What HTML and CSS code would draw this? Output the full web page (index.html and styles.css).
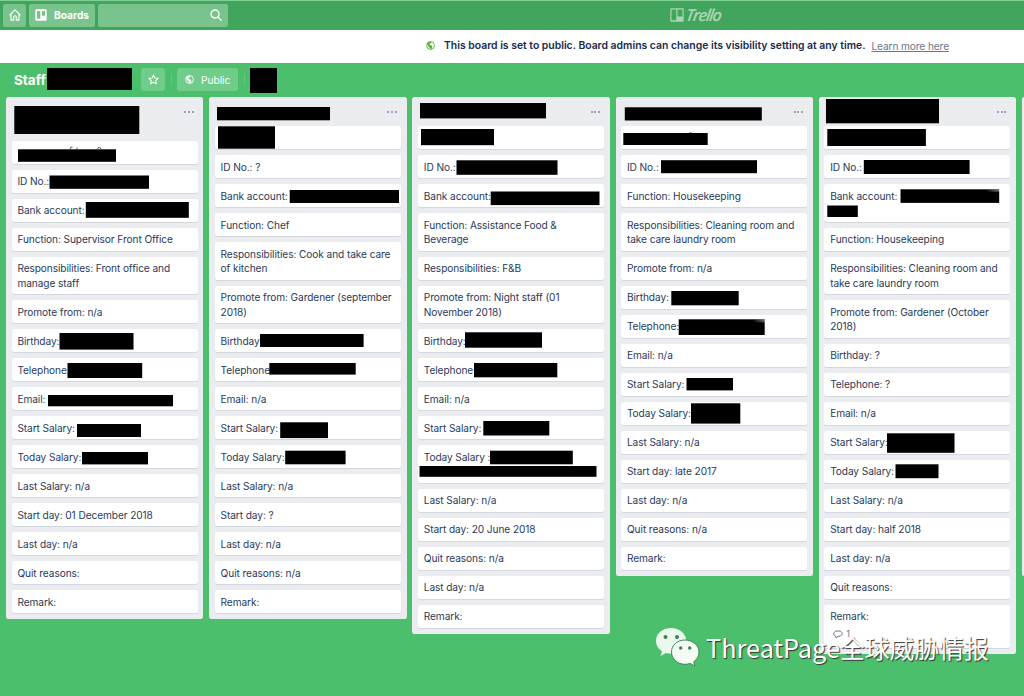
FILE: index.html
```html
<!DOCTYPE html>
<html lang="en">
<head>
<meta charset="utf-8">
<title>Staff | Trello</title>
<link rel="stylesheet" href="styles.css">
</head>
<body>
<header class="nav">
  <div class="nav-left">
    <span class="btn home"><svg width="12" height="12" viewBox="0 0 12 12" fill="none" stroke="#fff" stroke-width="1.1" stroke-linejoin="round" stroke-linecap="round"><path d="M.8 6 6 .9 11.2 6M2 5.2v5.9h2.7V8a1.3 1.3 0 0 1 2.6 0v3.1H10V5.2"/></svg></span>
    <span class="btn boards"><svg width="12" height="12" viewBox="0 0 12 12"><path fill="#fff" fill-rule="evenodd" d="M1.6.3h8.8c.8 0 1.3.5 1.3 1.3v8.8c0 .8-.5 1.3-1.3 1.3H1.6C.8 11.7.3 11.2.3 10.400V1.600C.3.800.8.300 1.600.300ZM2 1.900v7.800h3.300V1.900Zm5 0v4.800h3V1.900Z"/></svg>Boards</span>
    <span class="btn search"><svg width="12" height="12" viewBox="0 0 12 12" fill="none" stroke="#fff" stroke-width="1.3" stroke-linecap="round"><circle cx="5" cy="5" r="4"/><path d="m8 8 3.200 3.200"/></svg></span>
  </div>
  <div class="logo"><svg width="14" height="14" viewBox="0 0 14 14"><path fill="#a9d7b3" fill-rule="evenodd" d="M1.200.300h11.600c.6 0 .9.400.9.900v11.600c0 .5-.3.9-.9.9H1.200c-.5 0-.9-.4-.9-.9V1.200c0-.5.4-.9.9-.9ZM1.500 1.500v10.700h4.800V1.500Zm6 0v7h5v-7Z"/></svg><span>Trello</span></div>
</header>

<div class="banner">
  <svg class="globe" width="9" height="9" viewBox="0 0 10 10"><circle cx="5" cy="5" r="4.400" fill="none" stroke="#5aac44"/><path fill="#5aac44" d="M1 3.200 3.500.900l2.500.2-.6 1.500-1.500.6-.2 1 2 .5 1.500 1.700-1.200 2.500L5 9.300l-.9-2-1.500-1.100Z"/></svg>
  <b>This board is set to public. Board admins can change its visibility setting at any time.</b>
  <span class="more">Learn more here</span>
</div>

<div class="board-head">
  <h1>Staff</h1>
  <span class="btn star"><svg width="11" height="11" viewBox="0 0 12 12" fill="none" stroke="#fff" stroke-width="1.100" stroke-linejoin="round"><path d="m6 1 1.500 3.300 3.600.4-2.700 2.400.8 3.600L6 8.900l-3.200 1.800.8-3.600L.9 4.700l3.600-.4Z"/></svg></span>
  <i class="sep"></i>
  <span class="btn public"><svg width="9" height="9" viewBox="0 0 10 10"><circle cx="5" cy="5" r="4.400" fill="none" stroke="#fff"/><path fill="#fff" d="M1 3.200 3.500.900l2.500.2-.6 1.500-1.500.6-.2 1 2 .5 1.500 1.700-1.200 2.500L5 9.300l-.9-2-1.500-1.100Z"/></svg>Public</span>
  <i class="sep last"></i>
</div>

<main class="board">
  <section class="list">
    <div class="list-head tall"><span class="menu"><i></i><i></i><i></i></span></div>
    <div class="card"></div>
    <div class="card">ID No.:</div>
    <div class="card">Bank account:</div>
    <div class="card">Function: Supervisor Front Office</div>
    <div class="card">Responsibilities: Front office and<br>manage staff</div>
    <div class="card">Promote from: n/a</div>
    <div class="card">Birthday:</div>
    <div class="card">Telephone:</div>
    <div class="card">Email:</div>
    <div class="card">Start Salary:</div>
    <div class="card">Today Salary:</div>
    <div class="card">Last Salary: n/a</div>
    <div class="card">Start day: 01 December 2018</div>
    <div class="card">Last day: n/a</div>
    <div class="card">Quit reasons:</div>
    <div class="card">Remark:</div>
  </section>
  <section class="list">
    <div class="list-head"><span class="menu"><i></i><i></i><i></i></span></div>
    <div class="card"></div>
    <div class="card">ID No.: ?</div>
    <div class="card">Bank account:</div>
    <div class="card">Function: Chef</div>
    <div class="card">Responsibilities: Cook and take care<br>of kitchen</div>
    <div class="card">Promote from: Gardener (september<br>2018)</div>
    <div class="card">Birthday</div>
    <div class="card">Telephone</div>
    <div class="card">Email: n/a</div>
    <div class="card">Start Salary:</div>
    <div class="card">Today Salary:</div>
    <div class="card">Last Salary: n/a</div>
    <div class="card">Start day: ?</div>
    <div class="card">Last day: n/a</div>
    <div class="card">Quit reasons: n/a</div>
    <div class="card">Remark:</div>
  </section>
  <section class="list">
    <div class="list-head"><span class="menu"><i></i><i></i><i></i></span></div>
    <div class="card"></div>
    <div class="card">ID No.:</div>
    <div class="card">Bank account:</div>
    <div class="card">Function: Assistance Food &amp;<br>Beverage</div>
    <div class="card">Responsibilities: F&amp;B</div>
    <div class="card">Promote from: Night staff (01<br>November 2018)</div>
    <div class="card">Birthday:</div>
    <div class="card">Telephone:</div>
    <div class="card">Email: n/a</div>
    <div class="card">Start Salary:</div>
    <div class="card two-line">Today Salary :</div>
    <div class="card">Last Salary: n/a</div>
    <div class="card">Start day: 20 June 2018</div>
    <div class="card">Quit reasons: n/a</div>
    <div class="card">Last day: n/a</div>
    <div class="card">Remark:</div>
  </section>
  <section class="list">
    <div class="list-head"><span class="menu"><i></i><i></i><i></i></span></div>
    <div class="card"></div>
    <div class="card">ID No.:</div>
    <div class="card">Function: Housekeeping</div>
    <div class="card">Responsibilities: Cleaning room and<br>take care laundry room</div>
    <div class="card">Promote from: n/a</div>
    <div class="card">Birthday:</div>
    <div class="card">Telephone:</div>
    <div class="card">Email: n/a</div>
    <div class="card">Start Salary:</div>
    <div class="card">Today Salary:</div>
    <div class="card">Last Salary: n/a</div>
    <div class="card">Start day: late 2017</div>
    <div class="card">Last day: n/a</div>
    <div class="card">Quit reasons: n/a</div>
    <div class="card">Remark:</div>
  </section>
  <section class="list">
    <div class="list-head"><span class="menu"><i></i><i></i><i></i></span></div>
    <div class="card"></div>
    <div class="card">ID No.:</div>
    <div class="card two-line">Bank account:</div>
    <div class="card">Function: Housekeeping</div>
    <div class="card">Responsibilities: Cleaning room and<br>take care laundry room</div>
    <div class="card">Promote from: Gardener (October<br>2018)</div>
    <div class="card">Birthday: ?</div>
    <div class="card">Telephone: ?</div>
    <div class="card">Email: n/a</div>
    <div class="card">Start Salary:</div>
    <div class="card">Today Salary:</div>
    <div class="card">Last Salary: n/a</div>
    <div class="card">Start day: half 2018</div>
    <div class="card">Last day: n/a</div>
    <div class="card">Quit reasons:</div>
    <div class="card remark">Remark:
      <div class="badge"><svg width="10" height="9" viewBox="0 0 10 9" fill="none" stroke="#6b778c" stroke-width="1"><path d="M3 6.300C-.5 5.500.3 1 4 1h2c4.200 0 4.200 5.200 0 5.200H5L3 8Z"/></svg>1</div>
    </div>
  </section>
  <section class="list next"></section>
</main>

<!-- Redaction bars -->
<svg class="redactions" width="1024" height="696" viewBox="0 0 1024 696">
  <defs>
    <radialGradient id="fade" gradientUnits="objectBoundingBox" cx="1" cy=".1" r=".14"><stop offset="0" stop-color="#777"/><stop offset="1" stop-color="#000"/></radialGradient>
  </defs>
  <rect x="47" y="68" width="85" height="22"/><rect x="250" y="68" width="27" height="25"/>
  <rect x="14.300" y="106" width="125" height="28"/><rect x="18" y="149.300" width="98" height="12.500"/>
  <path d="M70 149.500q0-3 2.500-2.500M77 149v-1.500M97.500 149q0-2 2-1.500 1.500 0 1.200 1.500" fill="none" stroke="#42506b" stroke-width=".9"/>
  <rect x="49.500" y="175.500" width="99.500" height="13.300"/><rect x="85.800" y="202" width="103" height="15.800"/>
  <rect x="59.500" y="333" width="74" height="16.600"/><rect x="67.500" y="363" width="74.700" height="15"/>
  <rect x="48" y="395" width="125" height="11.300"/><rect x="77" y="424" width="64" height="13"/><rect x="82" y="452" width="66" height="12.400"/>
  <rect x="217" y="107" width="113" height="13.300"/><rect x="218" y="126.300" width="57" height="22.400"/>
  <rect x="289.700" y="190" width="109.300" height="13"/><rect x="260" y="334" width="103.600" height="13"/>
  <rect x="269.300" y="363" width="86.400" height="11.600"/><rect x="280.200" y="422.300" width="47.800" height="15.800"/><rect x="285.200" y="450.700" width="60.400" height="13.600"/>
  <rect x="420" y="103" width="126" height="15.400"/><rect x="421" y="129" width="73" height="16.200"/>
  <rect x="456.500" y="160.300" width="101" height="14.500"/><rect x="490.700" y="191.500" width="108.800" height="13.600"/>
  <rect x="465" y="332.300" width="77" height="15.400"/><rect x="474" y="363" width="83.300" height="14.300"/>
  <rect x="483.300" y="421" width="66" height="14.500"/><rect x="490" y="450.700" width="82.800" height="13.600"/><rect x="419.500" y="466" width="177" height="10.800"/>
  <path d="M689 133h3" fill="none" stroke="#555"/>
  <rect x="624.800" y="107.300" width="137" height="13.200"/><rect x="623.300" y="133" width="84.400" height="12"/>
  <rect x="661" y="160.200" width="96" height="13"/><rect x="671.300" y="291" width="67.400" height="14.300"/>
  <rect x="678.700" y="319.300" width="86" height="15.700" fill="url(#fade)"/><rect x="686.500" y="378" width="46.500" height="12.400"/><rect x="691" y="403.300" width="49.300" height="20.300"/>
  <rect x="826" y="99" width="113" height="24.300"/><rect x="827.300" y="129" width="98.600" height="17"/>
  <rect x="863.800" y="160" width="105.800" height="14"/><rect x="900.500" y="189.300" width="98.700" height="13.600" fill="url(#fade)"/>
  <rect x="827.300" y="205.500" width="30.500" height="11.500"/><rect x="887" y="433.300" width="67.500" height="19.500"/><rect x="895.500" y="464.300" width="43" height="13.900"/>
</svg>

<div class="watermark">
  <svg width="45" height="40" viewBox="0 0 45 40">
    <path fill="#eaf8ed" d="M16 1C7.500 1 1 6.500 1 14c0 4.200 2.300 8 6 10.300L5.600 29l5.400-3c1.700.5 3.300.8 5 .8 8.500 0 15.300-5.500 15.300-12.800S24.500 1 16 1Z"/>
    <path fill="#f3fbf4" stroke="#42845a" stroke-width="1" d="M30 13c-7.500 0-13.500 5-13.500 12S22.500 37.300 30 37.300c1.800 0 3.500-.3 5-.8l5 2.500-1.200-4.300c3.300-2.300 5.200-5.700 5.200-9.700C44 18 37.500 13 30 13Z"/>
    <g fill="#427f55"><circle cx="10.500" cy="10" r="2"/><circle cx="22" cy="10" r="2"/><circle cx="25.700" cy="21" r="1.700"/><circle cx="34.700" cy="21" r="1.700"/></g>
  </svg>
  <span>ThreatPage<span class="cjk">全球威胁情报</span></span>
</div>
</body>
</html>
```

FILE: styles.css
```css
* { box-sizing: border-box; }
body {
  margin: 0;
  width: 1024px;
  height: 696px;
  overflow: hidden;
  position: relative;
  background: #4bbf6b;
  font-family: Inter, "Liberation Sans", sans-serif;
  font-size: 10.15px;
  color: #2b3a5a;
}
svg { display: block; flex: none; }

.nav {
  height: 30px;
  display: grid;
  grid-template-columns: 667px auto 1fr;
  align-items: center;
  padding: 0 0 1px 3px;
  border-top: 1px solid #7fd196;
  background: #41a55d;
}
.nav-left { display: flex; gap: 3px; }
.btn {
  display: flex;
  align-items: center;
  height: 23px;
  border-radius: 2.5px;
  background: #79c48d;
  color: #fff;
}
.home { width: 23px; justify-content: center; }
.boards { width: 66px; padding-left: 6px; gap: 7px; font-weight: 700; font-size: 10.2px; }
.search { width: 130px; justify-content: flex-end; padding-right: 6px; }
.logo {
  display: flex;
  align-items: center;
  gap: 2px;
  color: #a9d7b3;
  font: italic 600 16.5px/20px "Open Sans", sans-serif;
  letter-spacing: -1.3px;
}
.logo span { transform: skewX(-8deg); }

.banner {
  height: 32.5px;
  display: flex;
  align-items: center;
  padding: 0 0 1px 426px;
  background: #fff;
  color: #172b4d;
  white-space: nowrap;
}
.banner b { margin-left: 9px; font-size: 10.4px; font-weight: 600; }
.more { margin-left: 6px; color: #6b778c; text-decoration: underline; letter-spacing: -.1px; }

.board-head {
  height: 34.8px;
  display: flex;
  align-items: center;
  padding-left: 14px;
}
.board-head h1 { margin: 0; width: 127px; font-size: 13.5px; font-weight: 700; color: #fff; }
.board-head .btn { background: #6fcc89; }
.star { width: 24px; justify-content: center; }
.sep { width: 1px; height: 11px; margin: 0 5px 0 6px; background: #65c980; }
.public { width: 61px; padding-left: 8px; gap: 7px; }
.sep.last { margin-left: 6px; }

.board {
  display: flex;
  align-items: flex-start;
  gap: 5.8px;
  padding-left: 6px;
  width: 1024px;
  overflow: hidden;
}
.list {
  flex: none;
  width: 197.4px;
  padding: 0 5.8px 5.8px 5.6px;
  display: flex;
  flex-direction: column;
  gap: 5.82px;
  border-radius: 2.5px;
  background: #ebecf0;
}
.list.next { width: 2px; height: 479px; padding: 0; border-radius: 2.5px 0 0 2.5px; }
.list-head { height: 23.2px; display: flex; justify-content: flex-end; padding: 14px 4px 0 0; }
.list-head.tall { height: 37.7px; }
.menu { display: flex; gap: 1.7px; }
.menu i { width: 2px; height: 2px; border-radius: 50%; background: #7f8a9d; }
.card {
  min-height: 23.2px;
  padding: 4.35px 5.8px;
  border-radius: 2.2px;
  background: #fff;
  box-shadow: 0 .8px 0 #ccd0d8;
  line-height: 14.5px;
  letter-spacing: -.085px;
  white-space: nowrap;
}
.two-line { min-height: 37.7px; }
.remark { height: 43px; }
.badge { display: flex; align-items: center; gap: 3px; padding-left: 3px; height: 22px; font-size: 9px; color: #6b778c; }

.redactions { position: absolute; left: 0; top: 0; }
.watermark {
  position: absolute;
  left: 655px;
  top: 627px;
  display: flex;
  align-items: center;
  gap: 6px;
  white-space: nowrap;
  color: #fff;
  font: 25.3px/38px "Noto Sans CJK SC", sans-serif;
  text-shadow: 1px 1px 1px #333;
}
.cjk { font-size: 24.8px; }
```
